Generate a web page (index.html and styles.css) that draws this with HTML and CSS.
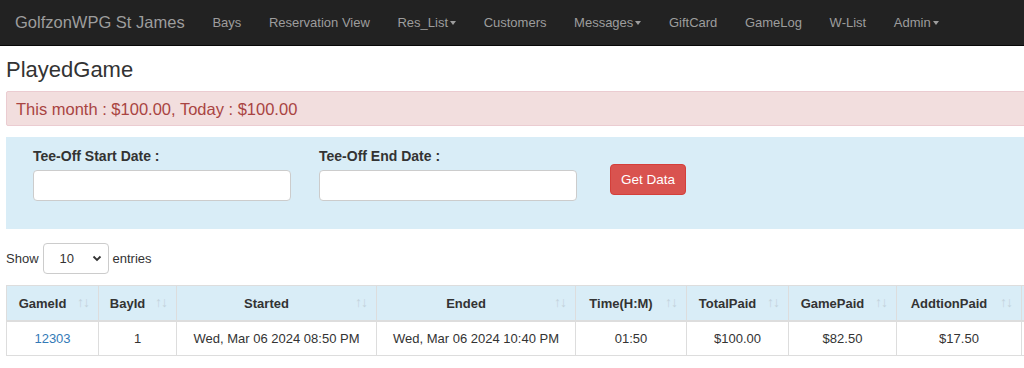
FILE: index.html
```html
<!DOCTYPE html>
<html lang="en">
<head>
  <meta charset="UTF-8" />
  <title>PlayedGame</title>
  <link rel="stylesheet" href="styles.css">
</head>
<body>

  <nav class="navbar">
    <a class="brand" href="#">GolfzonWPG St James</a>
    <ul class="nav-links">
      <li><a href="#">Bays</a></li>
      <li><a href="#">Reservation View</a></li>
      <li><a href="#">Res_List<span class="caret"></span></a></li>
      <li><a href="#">Customers</a></li>
      <li><a href="#">Messages<span class="caret"></span></a></li>
      <li><a href="#">GiftCard</a></li>
      <li><a href="#">GameLog</a></li>
      <li><a href="#">W-List</a></li>
      <li><a href="#">Admin<span class="caret"></span></a></li>
    </ul>
  </nav>

  <div class="page">
    <h3 class="page-title">PlayedGame</h3>

    <div class="alert-danger">This month : $100.00, Today : $100.00</div>

    <div class="search-well">
      <div class="field">
        <label>Tee-Off Start Date :</label>
        <input type="text" />
      </div>
      <div class="field">
        <label>Tee-Off End Date :</label>
        <input type="text" />
      </div>
      <button class="btn-danger">Get Data</button>
    </div>

    <div class="length-row">
      Show
      <div class="select-box">10
        <svg width="10" height="7" viewBox="0 0 10 7"><path d="M1.5 1.5 L5 5 L8.5 1.5" fill="none" stroke="#333" stroke-width="1.8"/></svg>
      </div>
      entries
    </div>

    <table class="games">
      <colgroup>
        <col style="width:92px"><col style="width:78px"><col style="width:200px"><col style="width:199px">
        <col style="width:111px"><col style="width:102px"><col style="width:108px"><col style="width:125px">
        <col style="width:110px">
      </colgroup>
      <thead>
        <tr>
          <th>GameId<span class="sort">↑↓</span></th>
          <th>BayId<span class="sort">↑↓</span></th>
          <th>Started<span class="sort">↑↓</span></th>
          <th>Ended<span class="sort">↑↓</span></th>
          <th>Time(H:M)<span class="sort">↑↓</span></th>
          <th>TotalPaid<span class="sort">↑↓</span></th>
          <th>GamePaid<span class="sort">↑↓</span></th>
          <th>AddtionPaid<span class="sort">↑↓</span></th>
          <th></th>
        </tr>
      </thead>
      <tbody>
        <tr>
          <td><a href="#">12303</a></td>
          <td>1</td>
          <td>Wed, Mar 06 2024 08:50 PM</td>
          <td>Wed, Mar 06 2024 10:40 PM</td>
          <td>01:50</td>
          <td>$100.00</td>
          <td>$82.50</td>
          <td>$17.50</td>
          <td></td>
        </tr>
      </tbody>
    </table>
  </div>

</body>
</html>
```

FILE: styles.css
```css
body, h3, ul, input, button, table {
  margin: 0;
  padding: 0;
  box-sizing: border-box;
}

body {
  font-family: "Liberation Sans", Arial, sans-serif;
  font-size: 13px;
  color: #333;
  background: #fff;
  overflow: hidden;
}

a {
  text-decoration: none;
}

/* top bar */
.navbar {
  display: flex;
  align-items: center;
  height: 45px;
  padding-left: 1px;
  background-color: #222;
  border-bottom: 1px solid #080808;
}

.brand {
  padding: 0 14px;
  font-size: 16.5px;
  color: #9d9d9d;
}

.nav-links {
  display: flex;
  list-style: none;
}

.nav-links a {
  display: flex;
  align-items: center;
  padding: 0 13.8px;
  font-size: 13px;
  color: #9d9d9d;
}

.caret {
  display: inline-block;
  margin-left: 2px;
  border-top: 4px solid #9d9d9d;
  border-left: 3.5px solid transparent;
  border-right: 3.5px solid transparent;
}

/* content */
.page {
  width: 1120px;
  padding-left: 6px;
}

.page-title {
  margin: 11px 0 9px;
  font-size: 22px;
  font-weight: normal;
  line-height: 25px;
  color: #333;
}

.alert-danger {
  height: 35px;
  padding: 7px 9px;
  font-size: 16.5px;
  line-height: 20px;
  color: #a94442;
  background-color: #f2dede;
  border: 1px solid #ebccd1;
  border-radius: 2px;
  box-sizing: border-box;
}

.search-well {
  display: flex;
  align-items: flex-start;
  gap: 28px;
  height: 92px;
  margin-top: 11px;
  padding: 11px 27px;
  background-color: #d9edf7;
  box-sizing: border-box;
}

.field {
  display: flex;
  flex-direction: column;
}

.field label {
  font-size: 14px;
  font-weight: bold;
  line-height: 15px;
  margin: 1px 0 6px;
}

.field input {
  width: 258px;
  height: 31px;
  background: #fff;
  border: 1px solid #ccc;
  border-radius: 4px;
}

.btn-danger {
  margin-top: 16px;
  margin-left: 5px;
  width: 76px;
  height: 31px;
  font-family: inherit;
  font-size: 13.5px;
  color: #fff;
  background-color: #d9534f;
  border: 1px solid #d43f3a;
  border-radius: 4px;
}

.length-row {
  display: flex;
  align-items: center;
  gap: 4px;
  margin-top: 14px;
  height: 31px;
}

.select-box {
  display: flex;
  align-items: center;
  justify-content: space-between;
  width: 66px;
  height: 31px;
  padding: 0 6px 0 16px;
  border: 1px solid #ccc;
  border-radius: 4px;
  box-sizing: border-box;
}

/* table */
.games {
  margin-top: 11px;
  table-layout: fixed;
  width: 1125px;
  border-collapse: collapse;
  border-top: 1px solid #ddd;
}

.games th {
  position: relative;
  height: 34px;
  padding: 0 30px 0 10px;
  text-align: center;
  font-weight: bold;
  background-color: #d9edf7;
  border-left: 1px solid #ddd;
  border-bottom: 2px solid #ddd;
  white-space: nowrap;
}

.sort {
  position: absolute;
  right: 9px;
  top: 8px;
  font-size: 14px;
  font-weight: normal;
  letter-spacing: -1px;
  color: #c3d3dc;
}

.games td {
  height: 33px;
  padding: 0 8px;
  text-align: center;
  border-left: 1px solid #ddd;
  border-bottom: 1px solid #ddd;
  white-space: nowrap;
}

.games td a {
  color: #337ab7;
}
```
